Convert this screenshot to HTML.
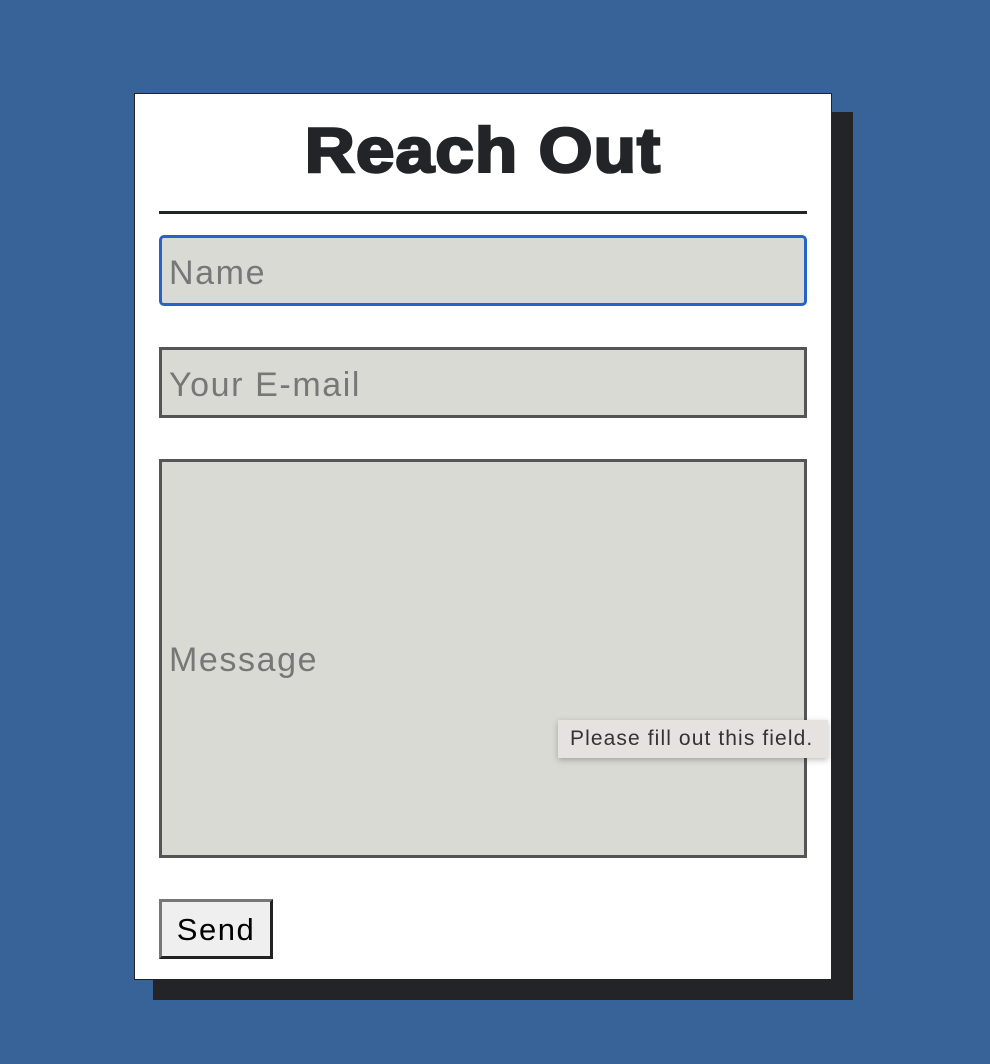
<!DOCTYPE html>
<html><head><style>
html,body{margin:0;padding:0}
body{width:990px;height:1064px;background:#386399;position:relative;overflow:hidden;font-family:"Liberation Sans",sans-serif}
.sh{position:absolute;left:153px;top:112px;width:700px;height:888px;background:#222428}
.card{position:absolute;left:134px;top:93px;width:696px;height:885px;background:#fff;border:1px solid #222428}
h1{position:absolute;left:0;width:966px;top:118px;margin:0;text-align:center;font-size:63px;font-weight:900;letter-spacing:1px;color:#222428;line-height:66px;-webkit-text-stroke:2.5px #222428;transform:scaleX(1.1);transform-origin:483px 0}
.line{position:absolute;left:159px;top:211px;width:648px;height:3px;background:#222428}
.in{position:absolute;left:159px;background:#dadad5;border:3px solid #555;box-sizing:content-box;color:#777;font-size:34px;letter-spacing:1.6px;padding-left:7px;width:635px}
.tip{position:absolute;left:558px;top:720px;width:270px;height:38px;background:#e6e2e0;box-shadow:0 2px 6px rgba(0,0,0,.25);font-size:21px;letter-spacing:1.1px;color:#333;line-height:38px;box-sizing:border-box;padding-left:12px;white-space:nowrap}
.btn{position:absolute;left:159px;top:899px;width:108px;height:54px;background:#efefef;border:3px solid;border-color:#777 #222 #222 #777;font-size:31px;letter-spacing:1.5px;line-height:56px;text-align:center;color:#000}
</style></head><body>
<div class="sh"></div>
<div class="card"></div>
<h1>Reach Out</h1>
<div class="line"></div>
<div class="in" style="top:235px;height:65px;line-height:70px;border-color:#2563c9;border-radius:5px">Name</div>
<div class="in" style="top:347px;height:65px;line-height:70px">Your E-mail</div>
<div class="in" style="top:459px;height:393px;line-height:396px">Message</div>
<div class="tip">Please fill out this field.</div>
<div class="btn">Send</div>
</body></html>
